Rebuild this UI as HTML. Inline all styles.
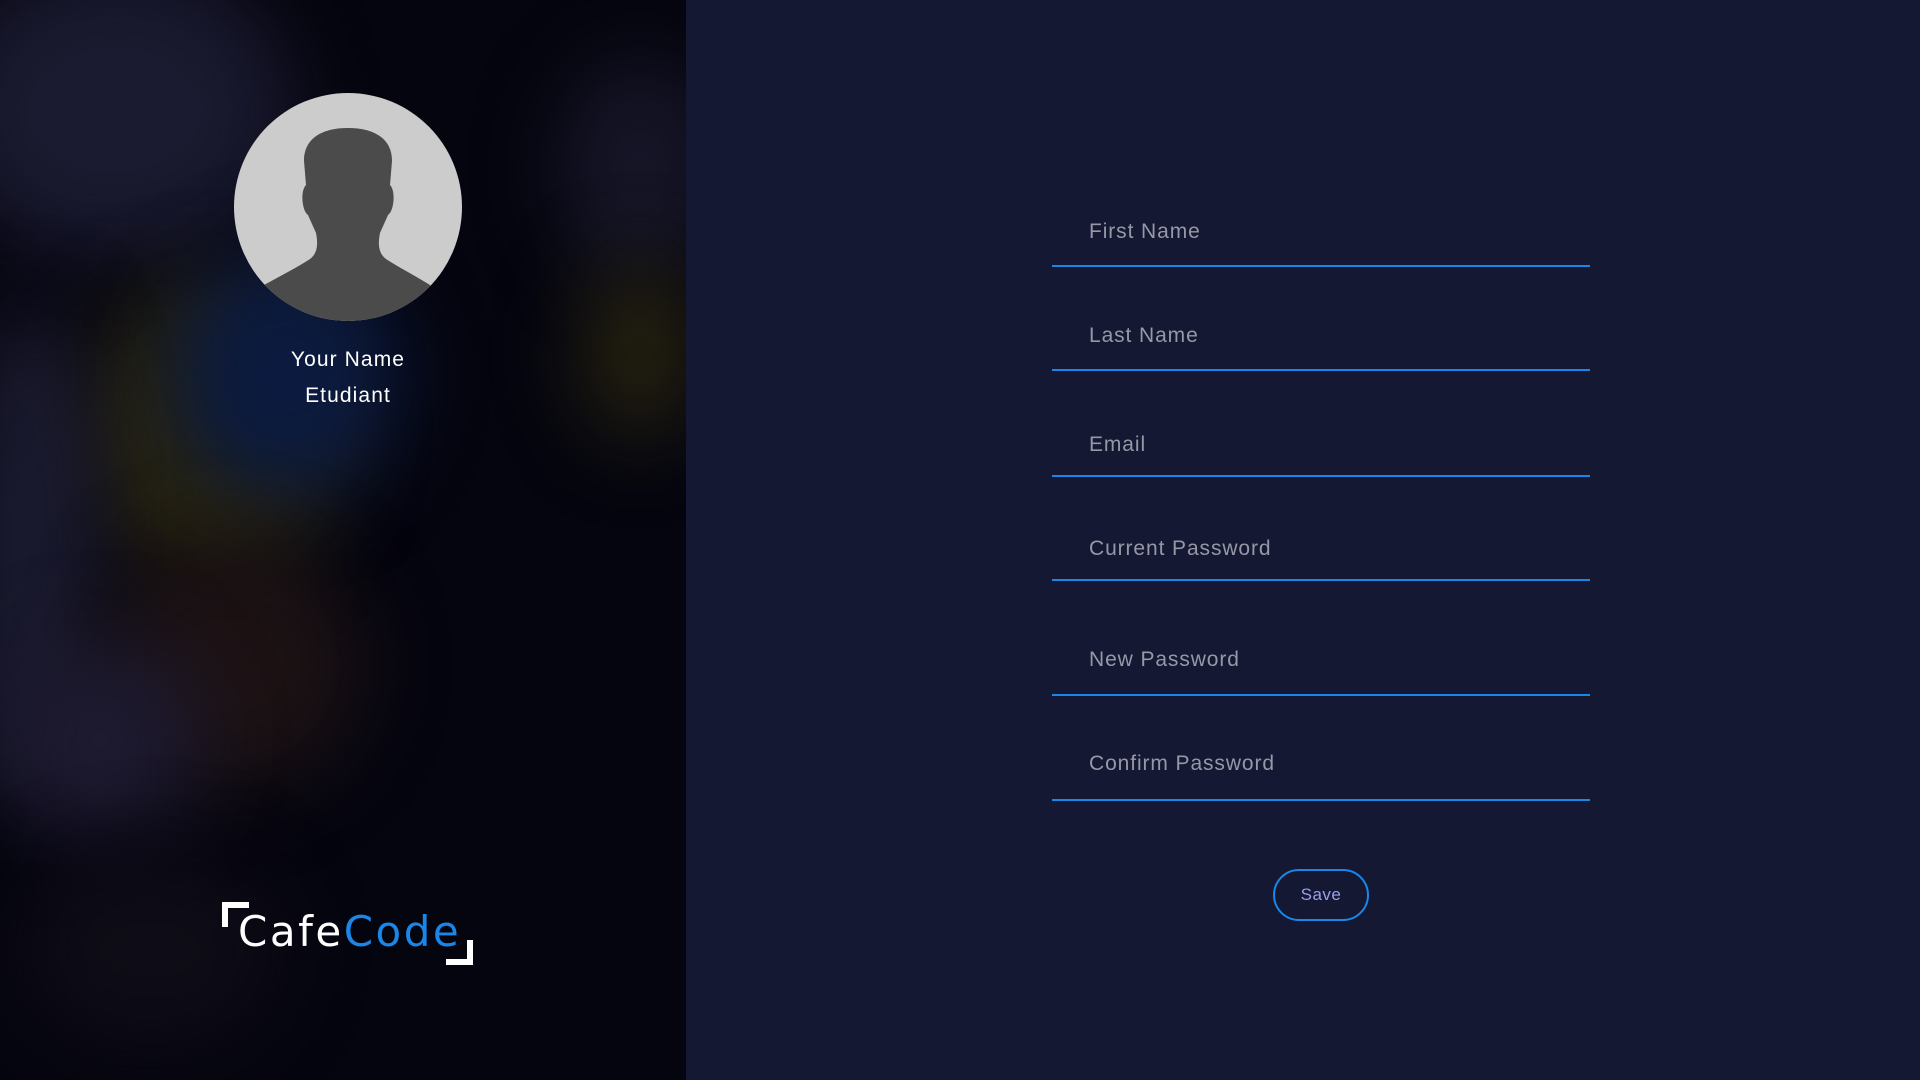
<!DOCTYPE html>
<html><head><meta charset="utf-8"><style>
*{margin:0;padding:0;box-sizing:border-box}
body{width:1920px;height:1080px;overflow:hidden;background:#141833;font-family:"Liberation Sans",sans-serif;position:relative}
#left{position:absolute;left:0;top:0;width:686px;height:1080px;background:#05050f;overflow:hidden}
.b{position:absolute;border-radius:50%;filter:blur(40px)}
#right{position:absolute;left:686px;top:0;width:1234px;height:1080px;background:#141833}
.f{position:absolute;left:1052px;width:538px;height:2px;background:#1a86e8}
.l{position:absolute;left:1089px;font-size:21px;letter-spacing:0.9px;color:#9698a6}
</style></head><body>
<div id="left">
 <div class="b" style="left:-60px;top:-40px;width:350px;height:300px;background:#1a1a30"></div>
 <div class="b" style="left:80px;top:280px;width:260px;height:300px;background:#28240f"></div>
 <div class="b" style="left:170px;top:250px;width:230px;height:250px;background:#0b1a3e"></div>
 <div class="b" style="left:-40px;top:300px;width:140px;height:500px;background:#1b1b30"></div>
 <div class="b" style="left:100px;top:540px;width:260px;height:250px;background:#1c1214"></div>
 <div class="b" style="left:0px;top:640px;width:200px;height:200px;background:#1e1a30"></div>
 <div class="b" style="left:560px;top:60px;width:160px;height:220px;background:#161628"></div>
 <div class="b" style="left:580px;top:260px;width:120px;height:180px;background:#24200f"></div>
 <div class="b" style="left:20px;top:850px;width:260px;height:200px;background:#0e0c16"></div>
</div>
<div id="right"></div>
<svg style="position:absolute;left:234px;top:93px" width="228" height="228" viewBox="0 0 228 228">
 <defs><clipPath id="c"><circle cx="114" cy="114" r="114"/></clipPath></defs>
 <circle cx="114" cy="114" r="114" fill="#cccccc"/>
 <path clip-path="url(#c)" fill="#4b4b4b" d="M114 35 C90 35 70 44 70 68 L72 92 C66 98 68 118 74 122 L82 140 C84 150 84 160 76 166 C64 174 48 182 30 192 L20 240 L208 240 L196 192 C180 182 164 174 152 166 C144 160 144 150 146 140 L154 122 C160 118 162 98 156 92 L158 68 C158 44 138 35 114 35Z"/>
</svg>
<div style="position:absolute;left:248px;width:200px;top:342px;text-align:center;color:#fff;font-size:21px;letter-spacing:1.1px;line-height:36px">Your Name<br>Etudiant</div>
<div style="position:absolute;left:222px;top:902px;width:27px;height:25px;border-left:6px solid #fff;border-top:6px solid #fff"></div>
<div style="position:absolute;left:446px;top:940px;width:27px;height:25px;border-right:6px solid #fff;border-bottom:6px solid #fff"></div>
<div style="position:absolute;left:238px;top:911px;font-size:42px;line-height:42px;letter-spacing:2.5px;color:#fff;font-family:'DejaVu Sans',sans-serif">Cafe<span style="color:#1a86e8">Code</span></div>
<div class="l" style="top:220px">First Name</div><div class="f" style="top:265px"></div>
<div class="l" style="top:324px">Last Name</div><div class="f" style="top:369px"></div>
<div class="l" style="top:433px">Email</div><div class="f" style="top:475px"></div>
<div class="l" style="top:537px">Current Password</div><div class="f" style="top:579px"></div>
<div class="l" style="top:648px">New Password</div><div class="f" style="top:694px"></div>
<div class="l" style="top:752px">Confirm Password</div><div class="f" style="top:799px"></div>
<div style="position:absolute;left:1273px;top:869px;width:96px;height:52px;border:2px solid #1a86e8;border-radius:26px;color:#9aa0e8;font-size:17px;text-align:center;line-height:48px;letter-spacing:.5px">Save</div>
</body></html>
